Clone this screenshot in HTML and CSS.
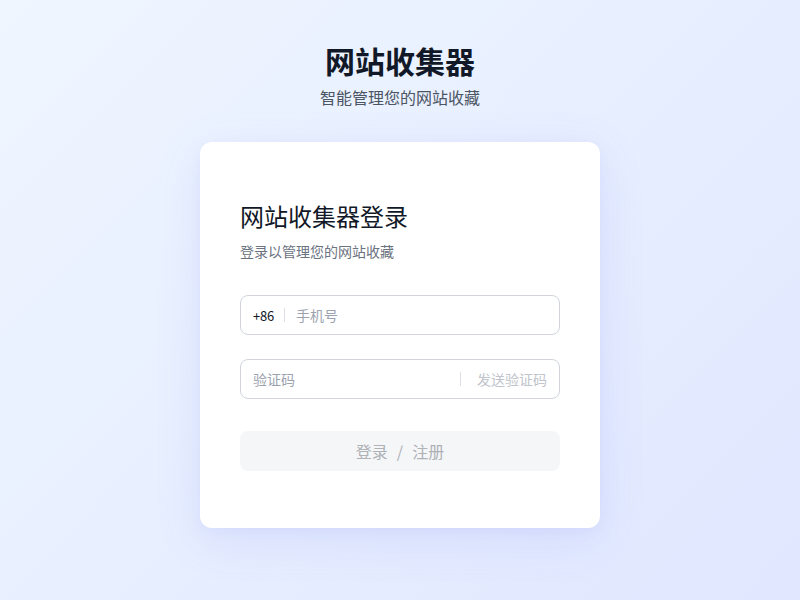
FILE: index.html
```html
<!DOCTYPE html>
<html lang="zh-CN">
<head>
<meta charset="utf-8">
<title>网站收集器</title>
<link rel="stylesheet" href="styles.css">
</head>
<body>
<div class="page">
  <header class="hero">
    <h1 class="hero-title">网站收集器</h1>
    <p class="hero-sub">智能管理您的网站收藏</p>
  </header>
  <main class="card">
    <h2 class="card-title">网站收集器登录</h2>
    <p class="card-sub">登录以管理您的网站收藏</p>
    <div class="field">
      <span class="prefix">+86</span>
      <span class="divider"></span>
      <input class="input" type="text" placeholder="手机号">
    </div>
    <div class="field field-code">
      <input class="input" type="text" placeholder="验证码">
      <span class="divider"></span>
      <span class="send">发送验证码</span>
    </div>
    <button class="submit" type="button">登录<span class="sep">/</span>注册</button>
  </main>
</div>
</body>
</html>
```
FILE: styles.css
```css
* { box-sizing: border-box; }
html, body { margin: 0; padding: 0; height: 100%; }
body {
  font-family: "Noto Sans CJK SC", "Noto Sans", sans-serif;
  background: linear-gradient(135deg, #eff6ff 0%, #e0e7ff 100%);
  color: #111827;
}
.page {
  min-height: 100%;
  display: flex;
  flex-direction: column;
  align-items: center;
  padding-top: 42px;
}
.hero { text-align: center; }
.hero-title {
  margin: 0;
  font-size: 30px;
  line-height: 36px;
  font-weight: 700;
  color: #111827;
}
.hero-sub {
  margin: 7px 0 0;
  font-size: 16px;
  line-height: 24px;
  color: #4b5563;
}
.card {
  margin-top: 33px;
  width: 400px;
  background: #fff;
  border-radius: 12px;
  padding: 56px 40px 57px;
  box-shadow: 0 12px 48px rgba(99, 110, 230, 0.12), 0 4px 12px rgba(99, 110, 230, 0.05);
}
.card-title {
  margin: 0;
  font-size: 24px;
  line-height: 36px;
  font-weight: 400;
  color: #111827;
}
.card-sub {
  margin: 6px 0 0;
  font-size: 14px;
  line-height: 22px;
  color: #6b7280;
}
.field {
  margin-top: 33px;
  height: 40px;
  border: 1px solid #d1d5db;
  border-radius: 8px;
  display: flex;
  align-items: center;
  padding: 0 12px;
}
.field-code { margin-top: 24px; }
.prefix {
  font-family: "Noto Sans CJK SC", sans-serif;
  font-size: 13px;
  letter-spacing: -0.2px;
  color: #111827;
}
.divider {
  width: 1px;
  height: 14px;
  background: #dcdfe6;
  margin: 0 11px 0 10px;
}
.field-code .divider { margin: 0 16px 0 0; }
.input {
  flex: 1;
  min-width: 0;
  border: 0;
  outline: 0;
  background: transparent;
  font-family: "Noto Sans CJK SC", "Noto Sans", sans-serif;
  font-size: 14px;
  color: #111827;
  padding: 0;
}
.input::placeholder { color: #9ca3af; }
.send {
  font-size: 14px;
  color: #c0c4cc;
}
.submit {
  margin-top: 32px;
  width: 100%;
  height: 40px;
  border: 0;
  border-radius: 8px;
  background: #f5f6f8;
  color: #aeb1b6;
  font-family: "Noto Sans CJK SC", "Noto Sans", sans-serif;
  font-size: 16px;
  display: block;
}
.sep { margin: 0 9px; }
```
